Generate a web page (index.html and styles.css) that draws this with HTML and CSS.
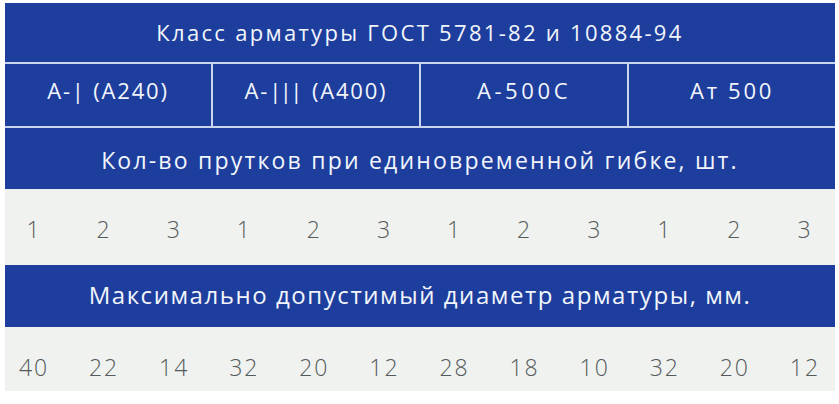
FILE: index.html
```html
<!DOCTYPE html>
<html lang="ru">
<head>
<meta charset="utf-8">
<link rel="stylesheet" href="styles.css">
</head>
<body>
<div class="page">
  <div class="table">
    <div class="row head title">Класс арматуры ГОСТ 5781-82 и 10884-94</div>
    <div class="row head classes">
      <div class="cls cls-a1">А-| (А240)</div>
      <div class="cls cls-a3">А-<span class="bars">|||</span>(А400)</div>
      <div class="cls cls-a500">А-500С</div>
      <div class="cls cls-at">Ат 500</div>
    </div>
    <div class="row head sub">Кол-во прутков при единовременной гибке, шт.</div>
    <div class="row nums first">
      <div class="grid">
        <span>1</span><span>2</span><span>3</span>
        <span>1</span><span>2</span><span>3</span>
        <span>1</span><span>2</span><span>3</span>
        <span>1</span><span>2</span><span>3</span>
      </div>
    </div>
    <div class="row head sub2">Максимально допустимый диаметр арматуры, мм.</div>
    <div class="row nums second">
      <div class="grid">
        <span>40</span><span>22</span><span>14</span>
        <span>32</span><span>20</span><span>12</span>
        <span>28</span><span>18</span><span>10</span>
        <span>32</span><span>20</span><span>12</span>
      </div>
    </div>
  </div>
</div>
</body>
</html>
```

FILE: styles.css
```css
html, body {
  margin: 0;
  padding: 0;
  background: #ffffff;
}

.page {
  width: 839px;
  height: 404px;
  padding: 3px 4px 0 5px;
  box-sizing: border-box;
  font-family: "Open Sans", "Liberation Sans", sans-serif;
}

.table {
  display: flex;
  flex-direction: column;
}

.row {
  box-sizing: border-box;
}

.head {
  background: #1d3e9d;
  color: #f2f5fb;
  display: flex;
  align-items: center;
  justify-content: center;
  white-space: nowrap;
}

.title {
  height: 61px;
  border-bottom: 2px solid #c9d5ec;
  font-size: 22px;
  letter-spacing: 2.3px;
  padding-bottom: 2px;
}

.classes {
  height: 64px;
  border-bottom: 2px solid #c9d5ec;
  align-items: stretch;
}

.cls {
  flex: 1;
  display: flex;
  align-items: center;
  justify-content: center;
  font-size: 22px;
  padding-bottom: 10px;
}

.cls + .cls {
  border-left: 2px solid #c9d5ec;
}

.cls-a1 {
  letter-spacing: 1.8px;
}

.cls-a3 {
  letter-spacing: 1.8px;
}

.bars {
  letter-spacing: -1.5px;
  margin-right: 11px;
}

.cls-a500 {
  letter-spacing: 3.6px;
}

.cls-at {
  letter-spacing: 2.7px;
}

.sub {
  height: 61px;
  font-size: 23px;
  letter-spacing: 2.2px;
  padding-top: 2px;
}

.sub2 {
  height: 62px;
  font-size: 24px;
  letter-spacing: 1.55px;
  padding-bottom: 4px;
}

.nums {
  background: #eff2ee;
  color: #54595b;
  font-weight: 300;
  font-size: 23px;
  letter-spacing: 2px;
  display: flex;
  align-items: center;
}

.nums.first {
  height: 76px;
  padding-top: 2px;
  border-top: 1px solid #e4ebf3;
}

.nums.second {
  height: 64px;
  padding-top: 15px;
}

.grid {
  flex: 1;
  margin: 0 -5px 0 -6px;
  display: grid;
  grid-template-columns: repeat(12, 1fr);
}

.grid span {
  text-align: center;
}
```
